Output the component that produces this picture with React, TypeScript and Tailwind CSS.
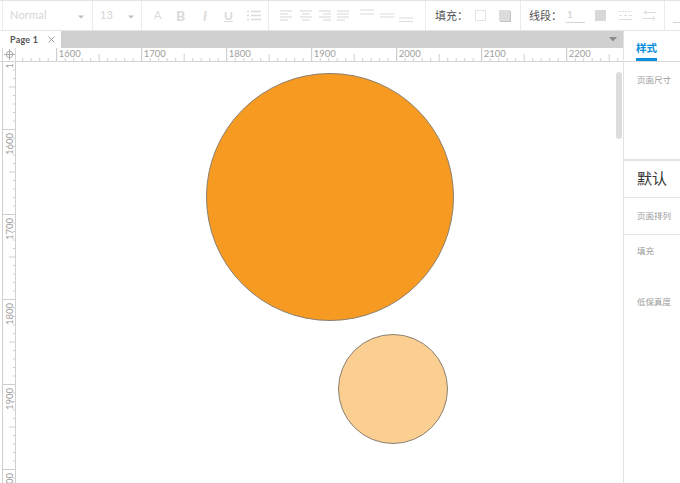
import React from "react";

const cjk = { fontFamily: '"Noto Sans CJK SC", "Noto Sans", sans-serif' };

function Caret({ className = "" }: { className?: string }) {
  return (
    <svg width="6" height="4" viewBox="0 0 6 4" className={className}>
      <path d="M0 0.5H6L3 3.5Z" fill="#bdbdbd" />
    </svg>
  );
}

function Lines({ rows }: { rows: [number, number][] }) {
  return (
    <svg width="13" height="11" viewBox="0 0 13 11" fill="none" stroke="#dcdcdc" strokeWidth="1.2">
      {rows.map(([a, b], i) => (
        <path key={i} d={`M${a} ${1 + i * 3}H${b}`} />
      ))}
    </svg>
  );
}

function HRuler() {
  const ticks: React.ReactNode[] = [];
  const labels: React.ReactNode[] = [];
  for (let i = -1; i < 7; i++) {
    const x = 41 + i * 85 - 0.3;
    for (let k = 0; k < 10; k++) {
      const tx = x + k * 8.5;
      const tall = k === 0 ? 13 : k === 5 ? 7 : 3;
      ticks.push(<line key={`${i}-${k}`} x1={tx} x2={tx} y1={13 - tall} y2={13} stroke={k === 0 ? "#c4c4c4" : "#cfcfcf"} strokeWidth="1" />);
    }
    if (i >= 0) labels.push(<span key={i} className="absolute top-0 text-[9.5px] leading-[11px] text-[#a0a0a0]" style={{ left: x + 2 }}>{1600 + i * 100}</span>);
  }
  return (
    <div className="relative flex-1 h-full overflow-hidden">
      <svg className="absolute inset-0" width="608" height="13">{ticks}</svg>
      {labels}
    </div>
  );
}

function VRuler() {
  const ticks: React.ReactNode[] = [];
  const labels: React.ReactNode[] = [];
  for (let i = 0; i < 6; i++) {
    const y = -17.5 + i * 85;
    for (let k = 0; k < 10; k++) {
      const ty = y + k * 8.5;
      const tall = k === 0 ? 13 : k === 5 ? 7 : 3;
      ticks.push(<line key={`${i}-${k}`} y1={ty} y2={ty} x1={13 - tall} x2={13} stroke="#cfcfcf" strokeWidth="1" />);
    }
    const text = i === 0 ? "1" : i === 5 ? "00" : String(1500 + i * 100);
    const top = i === 0 ? 1 : i === 5 ? 411 : y + 3.5;
    labels.push(
      <span key={i} className="absolute left-[1px] text-[9.5px] leading-[11px] text-[#a0a0a0] whitespace-nowrap rotate-180 [writing-mode:vertical-rl]" style={{ top }}>
        {text}
      </span>
    );
  }
  return (
    <div className="relative w-[14px] ml-[2px] h-full border-l border-r border-[#d0d0d0] overflow-hidden shrink-0">
      <svg className="absolute inset-0" width="13" height="422">{ticks}</svg>
      {labels}
    </div>
  );
}

export default function App() {
  return (
    <div className="w-[680px] h-[483px] bg-white flex flex-col overflow-hidden" style={{ fontFamily: '"Lato", "Noto Sans CJK SC", sans-serif' }}>
      {/* toolbar */}
      <div className="h-[31px] shrink-0 flex items-stretch border-b border-t border-[#e4e4e4] pl-[2px]">
        <div className="w-[91px] border-l border-r border-[#ececec] flex items-center justify-between pl-[7px] pr-[8px]">
          <span className="text-[11px] text-[#d4d4d4] tracking-[0.2px]">Normal</span>
          <Caret className="mt-[2px]" />
        </div>
        <div className="w-[49px] border-r border-[#ececec] flex items-center justify-between pl-[7px] pr-[7px]">
          <span className="text-[11px] text-[#d4d4d4]">13</span>
          <Caret className="mt-[2px]" />
        </div>
        <div className="w-[127px] border-r border-[#ececec] flex items-center pl-[11px] text-[#dadada]">
          <span className="w-[23px] text-[11px] leading-none -mt-[3px] pl-px">A</span>
          <span className="w-[25px] text-[14px] font-bold leading-none">B</span>
          <span className="w-[23px] text-[14px] font-bold italic leading-none pl-[2px]">I</span>
          <span className="w-[23px] text-[12px] font-bold underline leading-none">U</span>
          <svg width="14" height="11" viewBox="0 0 14 11" fill="none" stroke="#dadada" strokeWidth="1.4"><path d="M4 1.5H14M4 5.5H14M4 9.5H14M0 1.5H2M0 5.5H2M0 9.5H2" /></svg>
        </div>
        <div className="w-[157px] border-r border-[#ececec] flex items-center pl-[11px] gap-[7px]">
          <Lines rows={[[0, 12], [0, 8], [0, 12], [0, 8]]} />
          <Lines rows={[[0, 12], [2, 10], [0, 12], [2, 10]]} />
          <div className="-ml-px"><Lines rows={[[0, 12], [4, 12], [0, 12], [4, 12]]} /></div>
          <div className="-ml-[2px]"><Lines rows={[[0, 12], [0, 12], [0, 12], [0, 8]]} /></div>
          <svg width="54" height="16" viewBox="0 0 54 16" fill="none" stroke="#dcdcdc" strokeWidth="1.2" className="ml-[3px]">
            <path d="M0 2H14M0 6H14M20 6H34M20 9H34M39 10H53M39 13.5H53" />
          </svg>
        </div>
        <div className="w-[95px] border-r border-[#ececec] flex items-center pl-[9px]">
          <span className="text-[11px] text-[#555]" style={cjk}>填充：</span>
          <span className="ml-[7px] w-[11px] h-[11px] border border-[#e4e4e4]" />
          <span className="ml-[13px] w-[11px] h-[11px] bg-[#dcdcdc] shadow-[1px_1px_0_#c4c4c4]" />
        </div>
        <div className="w-[144px] border-r border-[#ececec] flex items-center pl-[8px]">
          <span className="text-[11px] text-[#555]" style={cjk}>线段：</span>
          <span className="ml-[4px] w-[19px] h-[15px] border-b border-[#d4d4d4] text-[10px] leading-[13px] text-[#d0d0d0] pl-px">1</span>
          <span className="ml-[10px] w-[11px] h-[11px] bg-[#d8d8d8]" />
          <span className="ml-[13px]">
            <svg width="13" height="11" viewBox="0 0 13 11" fill="none" stroke="#e0e0e0"><path d="M0 1.5H13" strokeDasharray="2 1" /><path d="M0 5.5H13" strokeDasharray="3 2" /><path d="M0 9.5H13" /></svg>
          </span>
          <span className="ml-[11px]">
            <svg width="13" height="11" viewBox="0 0 13 11" fill="none" stroke="#dcdcdc"><path d="M13 2.5H1M3.5 0.5L1 2.5L3.5 4.5M0 8.5H12M9.5 6.5L12 8.5L9.5 10.5" /></svg>
          </span>
        </div>
        <div className="flex-1 flex items-center pl-[8px]"><span className="w-full h-[15px] border-b border-[#d4d4d4]" /></div>
      </div>

      {/* body */}
      <div className="flex-1 flex min-h-0">
        <div className="w-[623px] flex flex-col">
          {/* tabs */}
          <div className="h-[17px] shrink-0 bg-[#d0d0d0] flex items-center justify-between pr-[6px]">
            <div className="h-full w-[61px] bg-white flex items-center justify-between pl-[10px] pr-[6px]">
              <span className="text-[9px] font-bold text-[#555] tracking-[0.2px]">Page 1</span>
              <svg width="7" height="7" viewBox="0 0 7 7" stroke="#888" strokeWidth="0.8"><path d="M0.5 0.5L6.5 6.5M6.5 0.5L0.5 6.5" /></svg>
            </div>
            <svg width="8" height="5" viewBox="0 0 8 5"><path d="M0 0H8L4 4.5Z" fill="#8a8a8a" /></svg>
          </div>
          {/* ruler */}
          <div className="h-[14px] shrink-0 flex border-b border-[#d4d4d4]">
            <div className="w-[14px] ml-[2px] flex items-center justify-center border-l border-r border-[#d8d8d8] shrink-0">
              <svg width="11" height="11" viewBox="0 0 11 11" fill="none" stroke="#9a9a9a" strokeWidth="0.8"><circle cx="5.5" cy="5.5" r="3.2" /><path d="M5.5 0V11M0 5.5H11" /></svg>
            </div>
            <HRuler />
          </div>
          {/* canvas */}
          <div className="flex-1 flex min-h-0">
            <VRuler />
            <div className="relative flex-1 overflow-hidden">
              <div className="absolute left-[190px] top-[11px] w-[248px] h-[248px] rounded-full bg-[#f79a22] border border-[#8a8070]" />
              <div className="absolute left-[322px] top-[272px] w-[110px] h-[110px] rounded-full bg-[#fbce92] border border-[#8a8070]" />
              <div className="absolute left-[600px] top-[10px] w-[6px] h-[67px] rounded-[3px] bg-[#dcdcdc]" />
            </div>
          </div>
        </div>

        {/* right panel */}
        <div className="flex-1 border-l border-[#e2e2e2] flex flex-col" style={cjk}>
          <div className="h-[31px] shrink-0 border-b border-[#d8d8d8] pl-[12px]">
            <span className="block w-[21px] h-full border-b-[3px] border-[#0b8fdc] text-[10.5px] font-bold text-[#0b8fdc] leading-[10px] pt-[12px] whitespace-nowrap">样式</span>
          </div>
          <div className="h-[99px] shrink-0 border-b-2 border-[#e2e2e2] pl-[13px] pt-[11px] text-[8.5px] leading-[12px] text-[#9a9a9a]">页面尺寸</div>
          <div className="h-[37px] shrink-0 border-b border-[#e2e2e2] pl-[13px] pb-[2px] flex items-center text-[15px] text-[#333]">默认</div>
          <div className="h-[37px] shrink-0 border-b border-[#e2e2e2] pl-[13px] pb-[2px] flex items-center text-[8.5px] text-[#9a9a9a]">页面排列</div>
          <div className="pl-[13px] pt-[9px] text-[8.5px] leading-[12px] text-[#9a9a9a]">填充</div>
          <div className="pl-[13px] pt-[39px] text-[8.5px] leading-[12px] text-[#9a9a9a]">低保真度</div>
        </div>
      </div>
    </div>
  );
}
